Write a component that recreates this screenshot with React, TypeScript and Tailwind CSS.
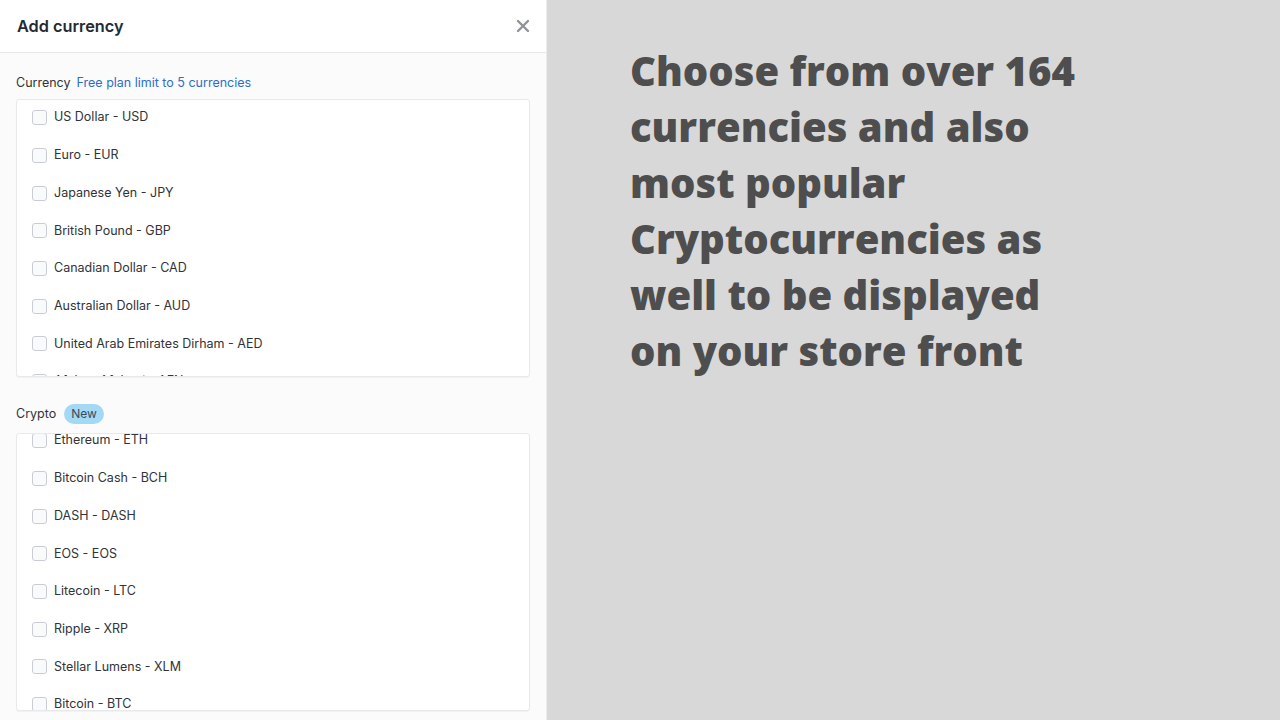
import { useState } from "react";

const CURRENCIES = [
  "US Dollar - USD",
  "Euro - EUR",
  "Japanese Yen - JPY",
  "British Pound - GBP",
  "Canadian Dollar - CAD",
  "Australian Dollar - AUD",
  "United Arab Emirates Dirham - AED",
  "Afghan Afghani - AFN",
];

const CRYPTO = [
  "Ethereum - ETH",
  "Bitcoin Cash - BCH",
  "DASH - DASH",
  "EOS - EOS",
  "Litecoin - LTC",
  "Ripple - XRP",
  "Stellar Lumens - XLM",
  "Bitcoin - BTC",
];

function Row({ label, checked, onToggle }: { label: string; checked: boolean; onToggle: () => void }) {
  return (
    <label className="flex h-[37.7px] shrink-0 cursor-pointer items-center gap-[7px] pl-[15px]">
      <input type="checkbox" checked={checked} onChange={onToggle} className="peer sr-only" />
      <span className="h-[15px] w-[15px] rounded-[3px] border border-[#c9cdd3] bg-[#f9fafb] peer-checked:border-[#2c6ecb] peer-checked:bg-[#2c6ecb]" />
      <span className="text-[12.5px] text-[#303338]">{label}</span>
    </label>
  );
}

function CheckList({ items, offset, picked, toggle }: { items: string[]; offset: string; picked: string[]; toggle: (s: string) => void }) {
  return (
    <div className="h-[278px] overflow-hidden rounded-[3px] border border-[#e8e9eb] bg-white shadow-[0_1px_1px_rgba(0,0,0,0.04)]">
      <div className={`flex flex-col ${offset}`}>
        {items.map((c) => (
          <Row key={c} label={c} checked={picked.includes(c)} onToggle={() => toggle(c)} />
        ))}
      </div>
    </div>
  );
}

export default function App() {
  const [picked, setPicked] = useState<string[]>([]);

  function toggle(s: string) {
    setPicked((p) => (p.includes(s) ? p.filter((x) => x !== s) : [...p, s]));
  }

  return (
    <div className="flex h-[720px] w-[1280px] overflow-hidden bg-[#d8d8d8] font-['Inter','Liberation_Sans',sans-serif]">
      {/* modal panel */}
      <div className="flex w-[547px] shrink-0 flex-col border-r border-[#ececec] bg-[#fbfbfb]">
        <div className="flex h-[53px] shrink-0 items-center justify-between border-b border-[#e6e7e9] bg-white pl-[17px] pr-[16px]">
          <h1 className="text-[16.3px] font-semibold text-[#212b36]">Add currency</h1>
          <button type="button" className="leading-none">
            <svg width="14" height="14" viewBox="0 0 14 14">
              <path d="M2 2 L12 12 M12 2 L2 12" stroke="#8f9297" strokeWidth="2.4" strokeLinecap="round" />
            </svg>
          </button>
        </div>

        <div className="flex flex-col px-[16px] pt-[21px]">
          <div className="flex h-[18px] items-center gap-[6px] text-[12.5px]">
            <span className="text-[#303338]">Currency</span>
            <span className="text-[#2c6ecb]">Free plan limit to 5 currencies</span>
          </div>
          <div className="mt-[7px]">
            <CheckList items={CURRENCIES} offset="-mt-[1px]" picked={picked} toggle={toggle} />
          </div>

          <div className="mt-[27px] flex h-[20px] items-center gap-[8px] text-[12.5px]">
            <span className="text-[#303338]">Crypto</span>
            <span className="rounded-full bg-[#a4d9f5] px-[7px] py-[1px] text-[12px] text-[#3b4a56]">New</span>
          </div>
          <div className="mt-[9px]">
            <CheckList items={CRYPTO} offset="-mt-[12px]" picked={picked} toggle={toggle} />
          </div>
        </div>
      </div>

      {/* copy */}
      <div className="flex-1 pl-[83px] pt-[43px]">
        <p className="w-[470px] font-['Open_Sans',sans-serif] text-[40px] font-extrabold leading-[56px] text-[#4e4e4e]">
          Choose from over 164 currencies and also most popular Cryptocurrencies as well to be displayed on your store front
        </p>
      </div>
    </div>
  );
}
